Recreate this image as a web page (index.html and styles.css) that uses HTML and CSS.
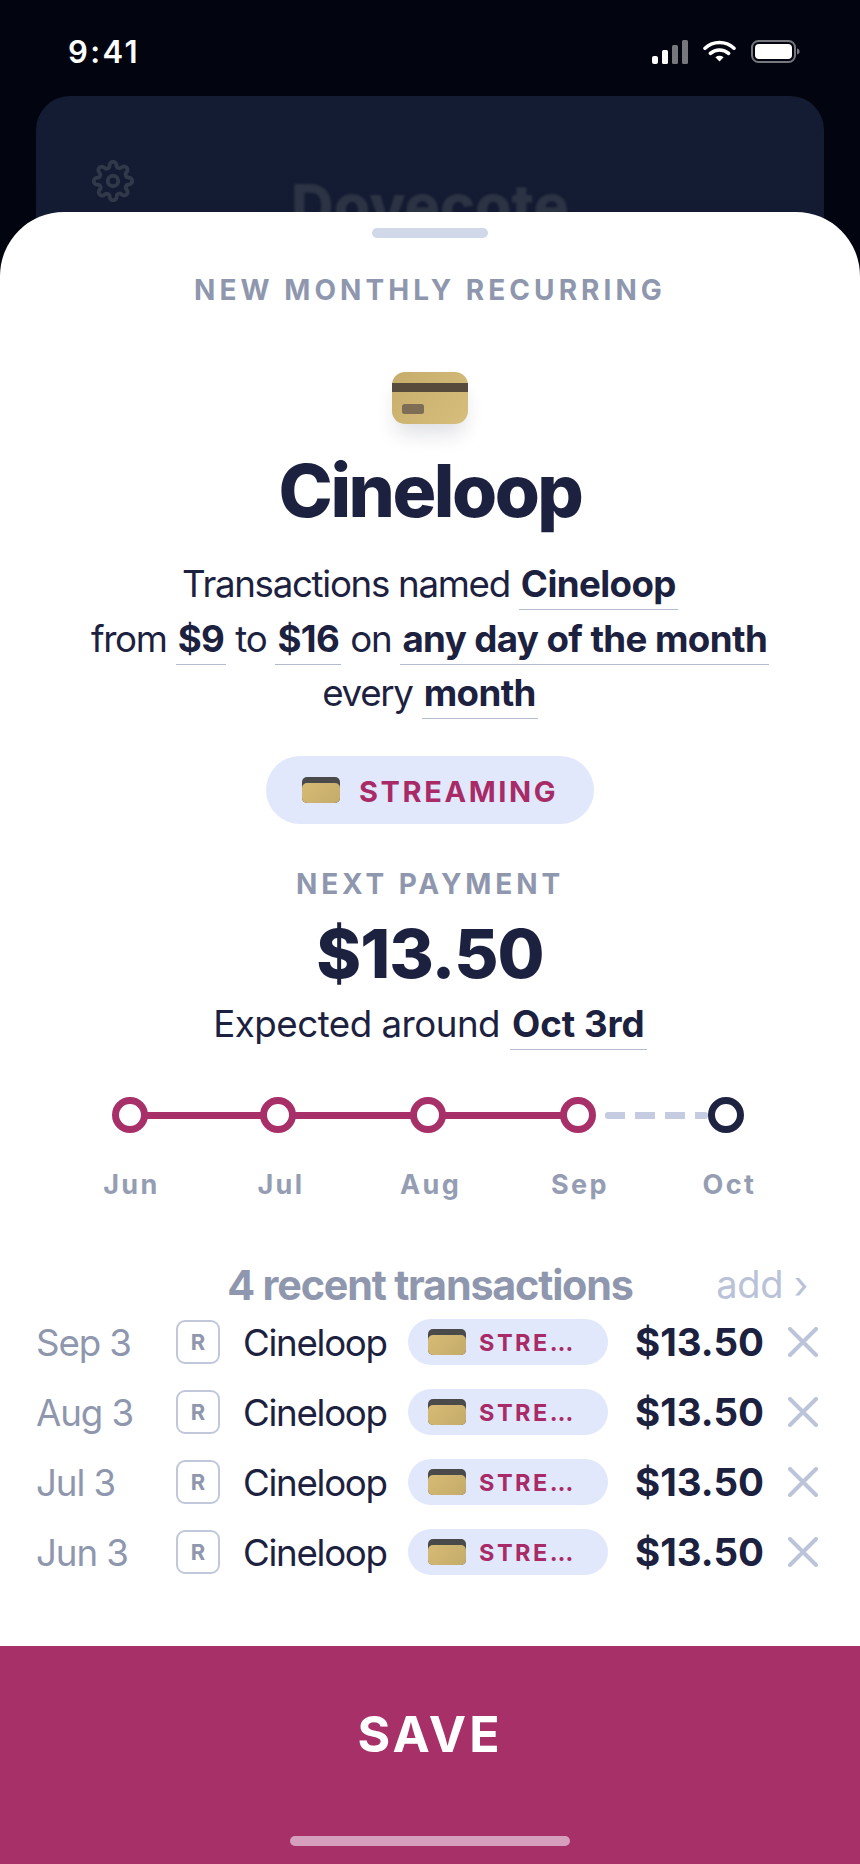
FILE: index.html
```html
<!DOCTYPE html>
<html lang="en">
<head>
<meta charset="utf-8">
<title>New monthly recurring</title>
<link rel="stylesheet" href="styles.css">
</head>
<body>
<div class="phone">
  <header class="status">
    <span class="time">9:41</span>
    <div class="status-icons">
      <svg class="signal" width="36" height="24" viewBox="0 0 36 24"><rect x="0" y="16" width="6" height="8" rx="2" fill="#fff"/><rect x="10" y="10" width="6" height="14" rx="1.5" fill="#fff"/><rect x="20" y="5" width="6" height="19" rx="1.5" fill="#77787e"/><rect x="30" y="0" width="6" height="24" rx="1.5" fill="#77787e"/></svg>
      <svg class="wifi" width="33" height="22" viewBox="0 0 33 22"><path d="M2 8.2C10.2 .6 22.8 .6 31 8.2M7.4 13.4C12.6 8.8 20.4 8.8 25.6 13.4" fill="none" stroke="#fff" stroke-width="3.6" stroke-linecap="round"/><path d="M12.4 17.2c2.4-1.8 5.8-1.8 8.2 0L16.5 21.6z" fill="#fff"/></svg>
      <svg class="battery" width="49" height="23" viewBox="0 0 49 23"><rect x="1" y="1" width="43" height="21" rx="6.5" fill="none" stroke="#77787e" stroke-width="2"/><rect x="4" y="4" width="37" height="15" rx="4" fill="#fff"/><path d="M46 8.5c2 .5 2.6 1.6 2.6 3s-.6 2.500-2.600 3z" fill="#77787e"/></svg>
    </div>
  </header>

  <div class="backdrop-card">
    <svg class="gear" width="42" height="42" viewBox="0 0 24 24" fill="none" stroke="#303849" stroke-width="2.200" stroke-linecap="round" stroke-linejoin="round"><circle cx="12" cy="12" r="3"/><path d="M19.400 15a1.650 1.650 0 0 0 .33 1.820l.06.06a2 2 0 1 1-2.830 2.830l-.06-.06a1.650 1.650 0 0 0-2.820 1.170V21a2 2 0 0 1-4 0v-.09A1.650 1.650 0 0 0 7.300 19.740l-.06.06a2 2 0 1 1-2.830-2.830l.06-.06a1.650 1.650 0 0 0-1.170-2.820H3a2 2 0 0 1 0-4h.09A1.650 1.650 0 0 0 4.260 7.300l-.06-.06a2 2 0 1 1 2.830-2.830l.06.06a1.650 1.650 0 0 0 1.820.33H9a1.650 1.650 0 0 0 1-1.510V3a2 2 0 0 1 4 0v.09a1.650 1.650 0 0 0 2.820 1.170l.06-.06a2 2 0 1 1 2.830 2.830l-.06.06a1.650 1.650 0 0 0-.33 1.820V9a1.650 1.650 0 0 0 1.510 1H21a2 2 0 0 1 0 4h-.09a1.650 1.650 0 0 0-1.510 1z"/></svg>
    <span class="backdrop-title">Dovecote</span>
  </div>

  <main class="sheet">
    <div class="handle"></div>
    <h2 class="eyebrow">NEW MONTHLY RECURRING</h2>
    <div class="hero-card"><div class="hero-stripe"></div><div class="hero-chip"></div></div>
    <h1 class="title">Cineloop</h1>
    <p class="summary">Transactions named <b class="link">Cineloop</b><br>from <b class="link">$9</b> to <b class="link">$16</b> on <b class="link">any day of the month</b><br>every <b class="link">month</b></p>
    <div class="category"><span class="mini-card"></span><span class="category-text">STREAMING</span></div>
    <h3 class="next-label">NEXT PAYMENT</h3>
    <div class="next-amount">$13.50</div>
    <p class="expected">Expected around <b class="link">Oct 3rd</b></p>

    <div class="timeline">
      <span class="node"></span><span class="seg first"></span>
      <span class="node"></span><span class="seg"></span>
      <span class="node"></span><span class="seg"></span>
      <span class="node"></span><span class="seg dashed"></span>
      <span class="node future"></span>
    </div>
    <div class="months"><span>Jun</span><span>Jul</span><span>Aug</span><span>Sep</span><span>Oct</span></div>

    <div class="tx-head"><span class="tx-title">4 recent transactions</span><span class="tx-add">add ›</span></div>
    <div class="rows">
      <div class="row"><span class="date">Sep 3</span><span class="r-box">R</span><span class="name">Cineloop</span><span class="tag"><span class="mini-card"></span><span class="tag-text">STRE…</span></span><span class="amount">$13.50</span><svg class="x" width="30" height="30" viewBox="0 0 30 30"><path d="M2 2l26 26M28 2L2 28"/></svg></div>
      <div class="row"><span class="date">Aug 3</span><span class="r-box">R</span><span class="name">Cineloop</span><span class="tag"><span class="mini-card"></span><span class="tag-text">STRE…</span></span><span class="amount">$13.50</span><svg class="x" width="30" height="30" viewBox="0 0 30 30"><path d="M2 2l26 26M28 2L2 28"/></svg></div>
      <div class="row"><span class="date">Jul 3</span><span class="r-box">R</span><span class="name">Cineloop</span><span class="tag"><span class="mini-card"></span><span class="tag-text">STRE…</span></span><span class="amount">$13.50</span><svg class="x" width="30" height="30" viewBox="0 0 30 30"><path d="M2 2l26 26M28 2L2 28"/></svg></div>
      <div class="row"><span class="date">Jun 3</span><span class="r-box">R</span><span class="name">Cineloop</span><span class="tag"><span class="mini-card"></span><span class="tag-text">STRE…</span></span><span class="amount">$13.50</span><svg class="x" width="30" height="30" viewBox="0 0 30 30"><path d="M2 2l26 26M28 2L2 28"/></svg></div>
    </div>

    <footer class="save">
      <span class="save-text">SAVE</span>
      <span class="home-bar"></span>
    </footer>
  </main>
</div>
</body>
</html>
```

FILE: styles.css
```css
* { box-sizing: border-box; }
html, body { margin: 0; padding: 0; }
body { background: #02040f; font-family: Inter, "Liberation Sans", sans-serif; color: #1c2140; }
h1, h2, h3, p { margin: 0; font: inherit; }
b { font-weight: 700; }

.phone { position: relative; width: 860px; height: 1864px; overflow: hidden; background: #02040f; }

.status { height: 96px; display: flex; justify-content: space-between; align-items: flex-start; padding: 33px 60px 0 68px; }
.time { color: #fff; font-size: 31px; line-height: 38px; font-weight: 600; letter-spacing: 2.400px; }
.status-icons { display: flex; align-items: flex-start; padding-top: 7px; }
.signal { margin-right: 15px; }
.wifi { margin-right: 15px; }

.backdrop-card { height: 300px; margin: 0 36px; padding: 64px 0 0 56px; border-radius: 34px; background: linear-gradient(#141c33, #121930); position: relative; }
.gear { display: block; filter: blur(.6px); }
.backdrop-title { position: absolute; left: 0; right: 0; top: 75px; text-align: center; font-size: 59px; line-height: 70px; font-weight: 800; color: #2c3344; filter: blur(1.200px); }

.sheet { position: absolute; left: 0; right: 0; top: 212px; bottom: 0; display: flex; flex-direction: column; align-items: center; background: #fff; border-radius: 64px 64px 0 0; }
.handle { width: 116px; height: 10px; margin-top: 16px; border-radius: 5px; background: #d0d8ea; }
.eyebrow { margin-top: 32px; font-size: 28px; line-height: 40px; font-weight: 700; letter-spacing: 4.050px; color: #8f97ae; }

.hero-card { position: relative; width: 76px; height: 52px; margin-top: 62px; border-radius: 13px; background: linear-gradient(135deg, #c6ad6b, #d8be7c); box-shadow: 0 14px 20px -4px rgba(30, 35, 70, .14); }
.hero-stripe { position: absolute; left: 0; right: 0; top: 11px; height: 9px; background: #574c3c; }
.hero-chip { position: absolute; left: 10px; top: 32px; width: 22px; height: 10px; border-radius: 2.500px; background: #7c6d54; }

.title { margin-top: 23px; font-size: 73px; line-height: 88px; font-weight: 800; letter-spacing: -2.500px; color: #1c2140; }

.summary { margin-top: 22px; text-align: center; font-size: 36.700px; line-height: 54.700px; letter-spacing: -1.300px; color: #1c2140; }
.link { padding: 0 2px 3px; border-bottom: 1.500px solid #b4bbd0; letter-spacing: -.6px; }

.category { display: flex; align-items: center; height: 68px; width: 328px; margin-top: 35px; padding-left: 36px; gap: 19px; border-radius: 34px; background: #e1e8fb; color: #a82b68; font-size: 29px; font-weight: 700; letter-spacing: 2.600px; }
.category-text { padding-top: 2px; }
.mini-card { flex: none; display: block; width: 38px; height: 26px; padding-top: 6px; border-radius: 5px; background: #4a4a4a; }
.mini-card::after { content: ""; display: block; height: 20px; border-radius: 5px; background: linear-gradient(135deg, #d5bb74, #c5ab6a); }

.next-label { margin-top: 40px; font-size: 28px; line-height: 40px; font-weight: 700; letter-spacing: 3.900px; color: #8f97ae; }
.next-amount { margin-top: 11px; font-size: 68px; line-height: 76px; font-weight: 800; letter-spacing: -1px; color: #1c2140; }
.expected { margin-top: 5px; font-size: 36.700px; line-height: 55px; letter-spacing: -.5px; color: #1c2140; }
.expected .link { letter-spacing: 0; }

.timeline { display: flex; align-items: center; align-self: flex-start; margin-top: 46px; margin-left: 112px; }
.node { flex: none; width: 36px; height: 36px; border: 7px solid #a83068; border-radius: 50%; background: #fff; position: relative; }
.node.future { border-color: #1f2342; }
.seg { flex: none; width: 116px; height: 7px; background: #a83068; margin: 0 -1px; }
.seg.first { width: 114px; }
.seg.dashed { width: 103px; height: 7px; margin: 0 0 0 9px; background: repeating-linear-gradient(90deg, #c5cbe0 0 20px, transparent 20px 30px); border-radius: 3px; }

.months { display: grid; grid-template-columns: repeat(5, 149.500px); margin-top: 34px; margin-left: 1px; text-align: center; font-size: 27px; line-height: 36px; font-weight: 700; letter-spacing: 2.400px; color: #959db3; }

.tx-head { position: relative; align-self: stretch; margin-top: 54px; height: 56px; text-align: center; }
.tx-title { font-size: 41.300px; line-height: 56px; font-weight: 700; letter-spacing: -1.200px; color: #8f97ae; }
.tx-add { position: absolute; right: 52px; top: 0; font-size: 38px; line-height: 54px; letter-spacing: -.3px; color: #bac2d8; }

.rows { align-self: stretch; margin-top: -6px; padding-left: 36px; }
.row { display: flex; align-items: center; height: 70px; }
.date { width: 140px; font-size: 36.700px; letter-spacing: -1.100px; color: #8f97ae; }
.r-box { display: flex; align-items: center; justify-content: center; width: 44px; height: 44px; border: 2px solid #c1c8dc; border-radius: 9px; font-size: 22px; font-weight: 700; color: #8f97ae; }
.name { width: 188px; padding-left: 23px; font-size: 36.700px; letter-spacing: -1.300px; color: #1c2140; }
.tag { display: flex; align-items: center; width: 200px; height: 46px; padding-left: 20px; gap: 13px; border-radius: 23px; background: #e1e8fb; }
.tag-text { font-size: 23.500px; font-weight: 700; letter-spacing: 2.500px; color: #a82b68; }
.amount { flex: none; width: 180px; padding-left: 27px; font-size: 38.500px; font-weight: 700; color: #1c2140; }
.x { flex: none; }
.x path { fill: none; stroke: #bcc4d9; stroke-width: 4px; stroke-linecap: round; }

.save { position: relative; margin-top: auto; align-self: stretch; height: 218px; display: flex; flex-direction: column; align-items: center; background: #a83068; }
.save-text { margin-top: 58px; font-size: 50px; line-height: 60px; font-weight: 700; letter-spacing: 3px; color: #fff; }
.home-bar { position: absolute; left: 290px; bottom: 18px; width: 280px; height: 10px; border-radius: 5px; background: #d69fbd; }
```
